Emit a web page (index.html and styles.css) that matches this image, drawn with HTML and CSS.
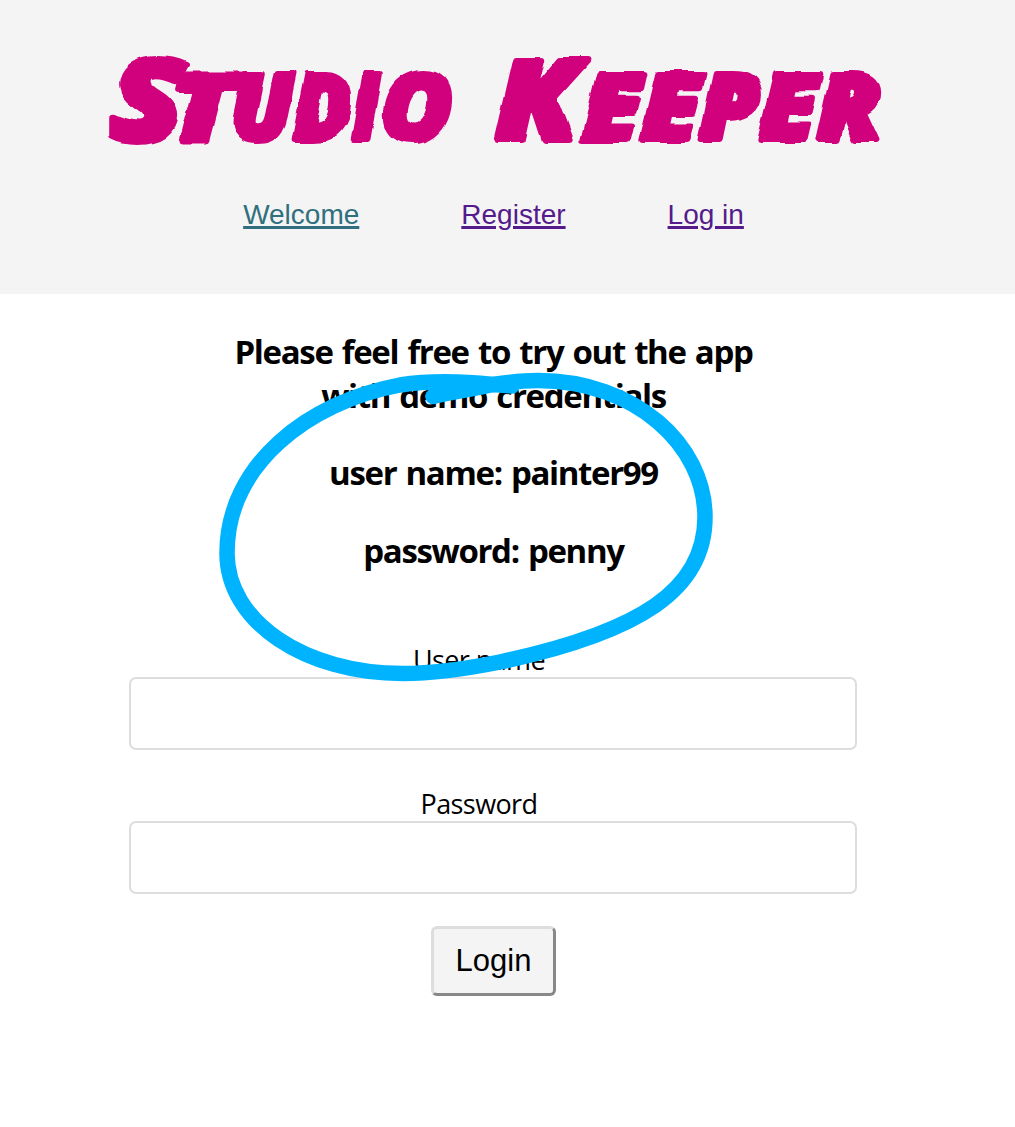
FILE: index.html
```html
<!DOCTYPE html>
<html lang="en">
<head>
<meta charset="utf-8">
<title>Studio Keeper</title>
<link rel="stylesheet" href="styles.css">
</head>
<body>
<header class="header">
  <h1 class="brand">
    <svg class="brand-art" width="810" height="175" viewBox="90 5 810 175">
      <defs><filter id="rough" x="-5%" y="-10%" width="110%" height="120%"><feTurbulence type="fractalNoise" baseFrequency=".045" numOctaves="1" seed="4"/><feDisplacementMap in="SourceGraphic" scale="7" xChannelSelector="R" yChannelSelector="G"/></filter></defs>
      <text class="brand-text" y="140" filter="url(#rough)"><tspan class="cap" x="110" textLength="73" lengthAdjust="spacingAndGlyphs">S</tspan><tspan x="170" textLength="64" lengthAdjust="spacingAndGlyphs">t</tspan><tspan x="230" textLength="63" lengthAdjust="spacingAndGlyphs">u</tspan><tspan x="293" textLength="58" lengthAdjust="spacingAndGlyphs">d</tspan><tspan x="352" textLength="27" lengthAdjust="spacingAndGlyphs">i</tspan><tspan x="381" textLength="71" lengthAdjust="spacingAndGlyphs">o</tspan> <tspan class="cap" x="496" textLength="82" lengthAdjust="spacingAndGlyphs">K</tspan><tspan x="582" textLength="59" lengthAdjust="spacingAndGlyphs">e</tspan><tspan x="641" textLength="59" lengthAdjust="spacingAndGlyphs">e</tspan><tspan x="700" textLength="59" lengthAdjust="spacingAndGlyphs">p</tspan><tspan x="759" textLength="58" lengthAdjust="spacingAndGlyphs">e</tspan><tspan x="817" textLength="64" lengthAdjust="spacingAndGlyphs">r</tspan></text>
    </svg>
  </h1>
  <nav class="nav">
    <a class="link current" href="#">Welcome</a>
    <a class="link" href="#">Register</a>
    <a class="link" href="#">Log in</a>
  </nav>
</header>
<main class="main">
  <section class="demo">
    <h2 class="note intro">Please feel free to try out the app<br>with demo credentials</h2>
    <h2 class="note user">user name: painter99</h2>
    <h2 class="note pass">password: penny</h2>
  </section>
  <form class="form">
    <label class="label" for="user">User name</label>
    <input class="field" id="user" type="text">
    <label class="label" for="password">Password</label>
    <input class="field" id="password" type="password">
    <button class="login" type="button">Login</button>
  </form>
  <svg class="circle" width="520" height="330" viewBox="210 365 520 330">
    <path d="M493 384.500C510 382 522 380.500 538 380.500C635 380.500 705 445 705 517C705 590 640 632 500 662C465 669 435 673.500 403 673.500C305 673.500 227 622 227 553C227 465 308 402 400 385C432 380 460 381 493 384.500"/>
    <path d="M433 396.500C453 392 473 389 493 384.500L512 386"/>
    <path d="M436 390L480 386"/>
  </svg>
</main>
</body>
</html>
```
FILE: styles.css
```css
* { box-sizing: border-box; }
body { margin: 0; background: #fff; color: #000; font-family: "Open Sans", "Noto Sans", sans-serif; }
.header { height: 293.5px; padding: 5px 28px 0 0; background: #f4f4f4; }
.brand { margin: 0 0 0 90px; height: 175px; }
.brand-art { display: block; }
.brand-text { font: italic 800 92px "Open Sans", sans-serif; text-transform: uppercase; fill: #d1007d; stroke: #d1007d; stroke-width: 6px; stroke-linejoin: round; }
.cap { font-size: 111px; }
.nav { display: flex; justify-content: center; gap: 102px; margin-top: 18px; }
.link { color: #551a8b; font: 28px/33px "Liberation Sans", Arial, sans-serif; text-decoration-thickness: 3px; text-underline-offset: 2px; }
.link.current { color: #2f6f7e; }
.main { position: relative; padding: 36px 28px 0 0; text-align: center; }
.note { margin: 0; font-size: 33px; line-height: 44px; font-weight: 700; letter-spacing: -1.35px; word-spacing: 2px; white-space: nowrap; }
.user, .pass { margin-top: 33.5px; }
.form { display: flex; flex-direction: column; align-items: center; margin-top: 69px; }
.label { font-size: 27px; line-height: 36px; margin-right: 29px; letter-spacing: -.6px; }
.field { width: 728px; height: 73px; border: 2px solid #ddd; border-radius: 7px; margin: -1px 1px 36px 0; background: #fff; }
#password { margin-bottom: 32.5px; }
.login { width: 125px; height: 70px; padding: 0; font: 31px "Liberation Sans", Arial, sans-serif; color: #000; background: #f4f4f4; border: 3px solid; border-color: #ddd #888 #888 #ddd; border-radius: 6px; }
.circle { position: absolute; left: 210px; top: 71.5px; fill: none; stroke: #00b3ff; stroke-width: 15.500px; stroke-linecap: round; stroke-linejoin: round; pointer-events: none; }
```
